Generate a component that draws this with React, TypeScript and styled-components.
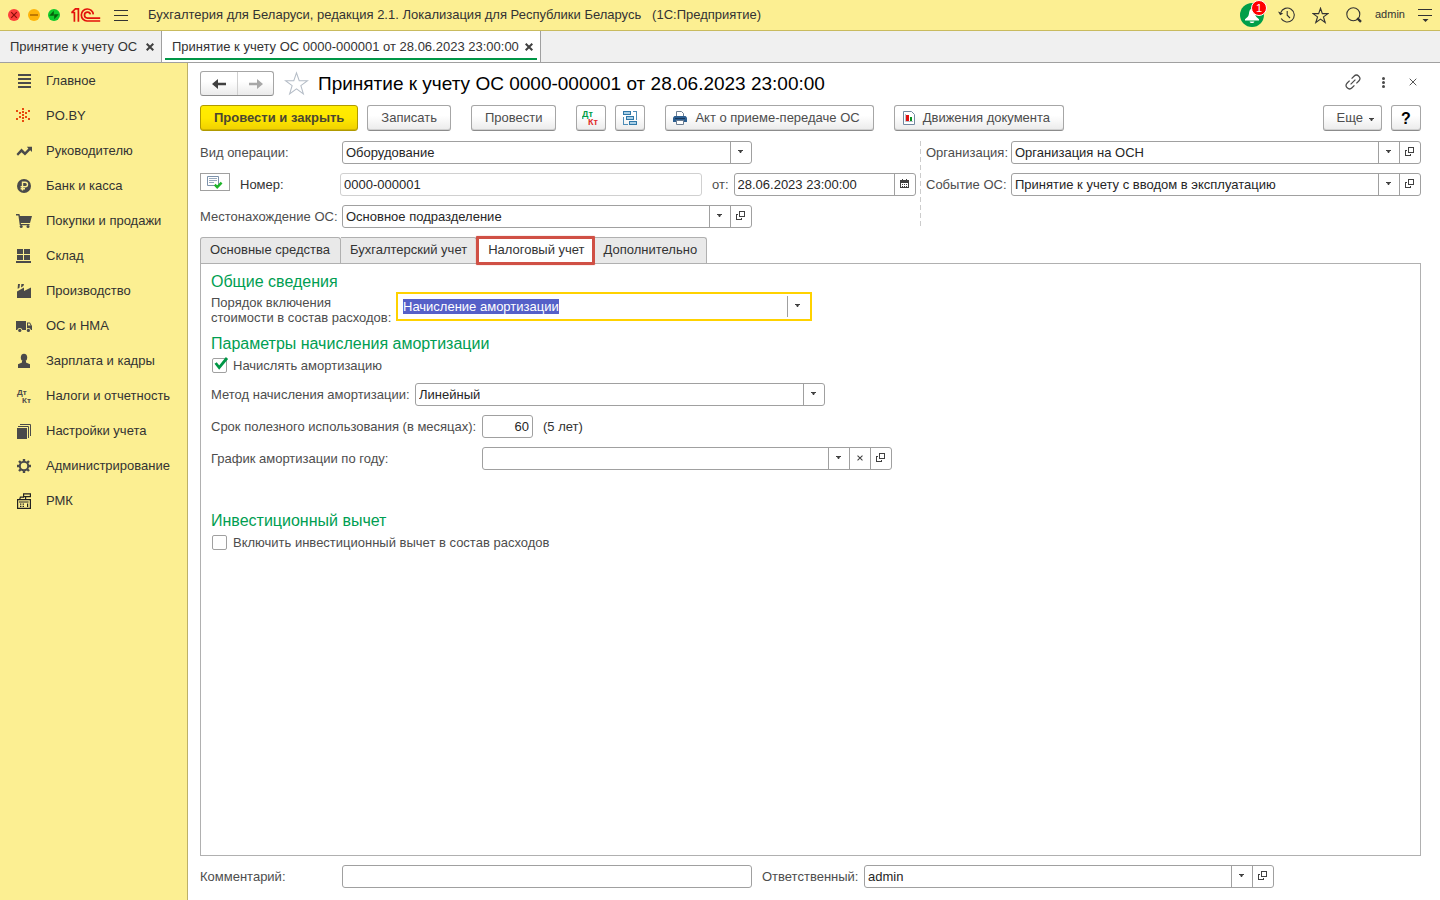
import React, { useEffect, useRef, useState } from "react";
import styled, { createGlobalStyle, css } from "styled-components";

const GlobalStyle = createGlobalStyle`
  *, *::before, *::after { box-sizing: border-box; }
  body {
    margin: 0;
    background: #fff;
    color: #333;
    font: 13px/15px "Liberation Sans", Arial, sans-serif;
  }
  button, input, select { font: inherit; color: inherit; margin: 0; }
  svg { display: block; flex: none; }
`;

/* ---------- frame ---------- */

const Page = styled.div`
  min-height: 100vh;
  display: flex;
  flex-direction: column;
`;

const TitleBar = styled.header`
  height: 31px;
  display: flex;
  align-items: center;
  padding: 0 7px 0 8px;
  background: #fcef92;
  border-bottom: 1px solid #c9bb5e;
`;

const PlainButton = styled.button`
  display: flex;
  align-items: center;
  justify-content: center;
  padding: 0;
  border: 0;
  background: none;
  cursor: pointer;
`;

const WindowButtons = styled.div`
  display: flex;
  gap: 8px;
  margin-right: 11px;
`;

const MenuButton = styled(PlainButton)`
  height: 30px;
  margin: 0 19px 0 13px;
  padding-top: 1px;
`;

const AppTitle = styled.span`
  flex: 1;
  padding-bottom: 1px;
  white-space: pre;
`;

const TopTools = styled.div`
  display: flex;
  align-items: center;
`;

const ToolSlot = styled(PlainButton)<{ $width: number }>`
  position: relative;
  width: ${(p) => p.$width}px;
  height: 30px;
`;

const Badge = styled.span`
  position: absolute;
  top: 0;
  right: 2px;
  width: 16px;
  height: 16px;
  border: 1px solid #fff;
  border-radius: 8px;
  background: #f00;
  color: #fff;
  font-size: 11px;
  line-height: 14px;
  text-align: center;
`;

const UserLink = styled.a`
  width: 29px;
  margin: 0 14px 2px 4px;
  color: #333;
  font-size: 11px;
  text-decoration: none;
`;

const WindowTabs = styled.nav`
  height: 32px;
  display: flex;
  background: #f0f0f0;
  border-bottom: 1px solid #a0a0a0;
`;

const WindowTab = styled.div<{ $active?: boolean }>`
  position: relative;
  min-width: 162px;
  display: flex;
  align-items: center;
  justify-content: space-between;
  gap: 6px;
  padding: 0 7px 0 10px;
  border-right: 1px solid #a0a0a0;
  background: ${(p) => (p.$active ? "#fff" : "transparent")};
  ${(p) =>
    p.$active &&
    css`
      &::after {
        content: "";
        position: absolute;
        left: 3px;
        right: 3px;
        bottom: 2px;
        height: 2px;
        background: #009646;
      }
    `}
`;

const TabLink = styled.a`
  color: #333;
  text-decoration: none;
  white-space: nowrap;
`;

const Body = styled.div`
  flex: 1;
  display: flex;
`;

const Sidebar = styled.nav`
  width: 188px;
  flex: none;
  background: #fcef92;
  border-right: 1px solid #bdb068;
`;

const SideLink = styled.a`
  height: 35px;
  display: flex;
  align-items: center;
  gap: 14px;
  padding-left: 16px;
  color: #333;
  text-decoration: none;
  white-space: nowrap;
`;

/* ---------- document form ---------- */

const Form = styled.main`
  flex: 1;
  min-width: 0;
  display: flex;
  flex-direction: column;
  padding: 8px 19px 12px 12px;
`;

const HeadRow = styled.div`
  display: flex;
  align-items: center;
  height: 25px;
`;

const NavGroup = styled.div`
  display: flex;
  height: 25px;
  border: 1px solid #a6a6a6;
  border-bottom-color: #8c8c8c;
  border-radius: 3px;
  background: linear-gradient(#fff, #fff 40%, #ebebeb);
`;

const NavButton = styled(PlainButton)`
  width: 36px;
  & + & { border-left: 1px solid #d0d0d0; }
`;

const FavButton = styled(PlainButton)`
  margin: 0 9px 0 10px;
`;

const DocTitle = styled.h1`
  flex: 1;
  margin: 0;
  color: #000;
  font-size: 19px;
  font-weight: 400;
  line-height: 24px;
  white-space: nowrap;
`;

const HeadTool = styled(PlainButton)`
  width: 30px;
  height: 24px;
  padding-bottom: 3px;
  &:last-child { margin-right: -7px; }
`;

const Toolbar = styled.div`
  display: flex;
  margin: 9px 0 10px;
`;

const Group = styled.div<{ $end?: boolean }>`
  display: flex;
  gap: 9px;
  margin-left: ${(p) => (p.$end ? "auto" : "0")};
  margin-right: ${(p) => (p.$end ? "0" : "20px")};
`;

const buttonPadding = { text: "0 13px 1px", icon: "0 13px 1px 7px", more: "0 7px 1px 13px", square: "0" };

const Button = styled.button<{ $primary?: boolean; $kind?: keyof typeof buttonPadding }>`
  height: 26px;
  display: flex;
  align-items: center;
  justify-content: center;
  gap: ${(p) => (p.$kind === "more" ? 6 : 8)}px;
  width: ${(p) => (p.$kind === "square" ? "30px" : "auto")};
  padding: ${(p) => buttonPadding[p.$kind ?? "text"]};
  border: 1px solid #a6a6a6;
  border-bottom-color: #8c8c8c;
  border-radius: 3px;
  background: linear-gradient(#fff, #fff 40%, #ebebeb);
  box-shadow: inset 0 -1px 0 #d0d0d0;
  color: #4d4d4d;
  white-space: nowrap;
  cursor: pointer;
  ${(p) =>
    p.$primary &&
    css`
      border-color: #b09a00;
      background: linear-gradient(#ffed00, #ffe800 50%, #f0d000);
      box-shadow: inset 0 -1px 0 #d0b400;
      color: #4a4630;
      font-weight: 700;
    `}
`;

const MoreArrow = styled.span`
  padding-top: 4px;
`;

const HelpMark = styled.span`
  color: #000;
  font-size: 16px;
  font-weight: 700;
`;

const Header = styled.div`
  display: flex;
  justify-content: space-between;
`;

const Column = styled.div<{ $divided?: boolean }>`
  display: flex;
  flex-direction: column;
  gap: 9px;
  ${(p) =>
    p.$divided &&
    css`
      padding-left: 6px;
      background: repeating-linear-gradient(#ccc 0 5px, #fff 5px 8px) left / 1px 100% no-repeat;
    `}
`;

const Row = styled.div`
  display: flex;
  align-items: center;
  height: 23px;
`;

const Label = styled.label<{ $width?: number; $dark?: boolean }>`
  width: ${(p) => (p.$width ? `${p.$width}px` : "auto")};
  flex: none;
  color: ${(p) => (p.$dark ? "#333" : "#4d4d4d")};
  white-space: nowrap;
`;

const Box = styled.div<{ $width: number; $pale?: boolean }>`
  width: ${(p) => p.$width}px;
  height: 23px;
  display: flex;
  border: 1px solid ${(p) => (p.$pale ? "#d0d0d0" : "#a0a0a0")};
  border-radius: 3px;
  background: #fff;
`;

const FocusBox = styled.div`
  width: 416px;
  height: 29px;
  display: flex;
  padding: 2px 1px;
  border: 2px solid #ffd200;
  background: #fff;
`;

const TextInput = styled.input<{ $right?: boolean; $inset?: boolean }>`
  flex: 1;
  min-width: 0;
  padding: 0 3px 0 ${(p) => (p.$inset ? 4 : 3)}px;
  border: 0;
  outline: 0;
  background: none;
  color: #262626;
  text-align: ${(p) => (p.$right ? "right" : "left")};
  &::selection { background: #5560c8; color: #fff; }
`;

const SelectCell = styled.div`
  flex: 1;
  min-width: 0;
  display: grid;
  grid-template-columns: 1fr 21px;
`;

const Select = styled.select`
  grid-area: 1 / 1 / 2 / 3;
  min-width: 0;
  appearance: none;
  padding: 0 24px 0 3px;
  border: 0;
  outline: 0;
  background: none;
  color: #262626;
`;

const SelectArrow = styled.span`
  grid-area: 1 / 2 / 2 / 3;
  display: flex;
  align-items: center;
  justify-content: center;
  padding: 0 1px 2px 0;
  border-left: 1px solid #a0a0a0;
  pointer-events: none;
`;

const CellButton = styled(PlainButton)<{ $wide?: boolean }>`
  width: ${(p) => (p.$wide ? 22 : 21)}px;
  flex: none;
  padding: 0 ${(p) => (p.$wide ? 2 : 1)}px 2px 0;
  border-left: 1px solid #a0a0a0;
`;

const StatusButton = styled(PlainButton)`
  width: 30px;
  height: 18px;
  margin: 0 10px 5px 0;
  border: 1px solid #a0a0a0;
  background: #fff;
`;

/* ---------- page tabs ---------- */

const TabStrip = styled.div`
  display: flex;
  height: 26px;
  margin-top: 9px;
`;

const PageTab = styled.button<{ $active?: boolean }>`
  position: relative;
  padding: 0 9px 2px;
  border: 1px solid #b0b0b0;
  border-width: 1px 1px 0 0;
  border-radius: 0 3px 0 0;
  background: #e9e9e9;
  color: #333;
  white-space: nowrap;
  &:first-child {
    padding-right: 10px;
    border-left-width: 1px;
    border-radius: 3px 3px 0 0;
  }
  ${(p) =>
    p.$active &&
    css`
      padding: 0 9px 2px 11px;
      background: #fff;
      &::after {
        content: "";
        position: absolute;
        inset: -2px -1px;
        border: 3px solid #d05045;
        border-radius: 1px;
        box-shadow: 0 0 1px #d05045;
      }
    `}
`;

const Panel = styled.section`
  flex: 1;
  padding: 8px 10px;
  border: 1px solid #b0b0b0;
`;

const GroupTitle = styled.h2<{ $top?: number }>`
  margin: ${(p) => p.$top ?? 0}px 0 0;
  color: #009e52;
  font-size: 16px;
  font-weight: 400;
  line-height: 20px;
`;

const FocusRow = styled.div`
  display: flex;
  height: 29px;
`;

const TwoLineLabel = styled.label`
  width: 185px;
  flex: none;
  padding-top: 3px;
  color: #4d4d4d;
  white-space: nowrap;
`;

const CheckLabel = styled.label`
  display: flex;
  align-items: center;
  gap: 6px;
  height: 23px;
  margin: 0 0 6px 1px;
  color: #4d4d4d;
`;

const CheckMark = styled.span`
  position: relative;
  display: block;
  width: 15px;
  height: 15px;
  svg { position: absolute; left: 1px; top: -2px; pointer-events: none; }
`;

const CheckInput = styled.input`
  display: block;
  width: 15px;
  height: 15px;
  appearance: none;
  border: 1px solid #a0a0a0;
  border-radius: 2px;
  background: #fff;
`;

const Fields = styled.div`
  display: flex;
  flex-direction: column;
  gap: 9px;
`;

const Note = styled.span`
  margin-left: 10px;
  color: #333;
`;

const DateLabel = styled.label`
  margin: 0 5px 0 10px;
  color: #4d4d4d;
`;

const Footer = styled.div`
  display: flex;
  align-items: center;
  height: 23px;
  margin-top: 9px;
`;

const FooterPart = styled.div`
  display: flex;
  align-items: center;
  margin-right: 10px;
`;

/* ---------- drawings ---------- */

const INK = "#4a4a4a";

const Arrow = () => (
  <svg width="5" height="3" viewBox="0 0 5 3">
    <path d="M0 0H5V1H4L3 3H2L1 1H0Z" fill="#404040" />
  </svg>
);

const OpenIcon = () => (
  <svg width="9" height="9" viewBox="0 0 9 9" fill="none" stroke="#404040" shapeRendering="crispEdges">
    <path d="M3.5 0.5H8.5V5.5H3.5Z M2 3.5H0.5V8.5H5.5V7" />
  </svg>
);

const Cross = ({ size, width = 1, color = "#404040" }: { size: number; width?: number; color?: string }) => (
  <svg width={size} height={size} viewBox="0 0 8 8" fill="none" stroke={color} strokeWidth={width}>
    <path d="M0.7 0.7L7.3 7.3M7.3 0.7L0.7 7.3" />
  </svg>
);

const CalendarIcon = () => (
  <svg width="9" height="9" viewBox="0 0 9 9" fill="#404040" shapeRendering="crispEdges">
    <path d="M0 1H9V9H0Z M1 4V8H8V4Z" fillRule="evenodd" />
    <path d="M2 0h1v1h-1z M6 0h1v1h-1z M2 5h1v1h-1z M4 5h1v1h-1z M6 5h1v1h-1z M2 7h1v1h-1z M4 7h1v1h-1z M6 7h1v1h-1z" />
  </svg>
);

const Logo = () => (
  <svg width="30" height="14" viewBox="0 0 30 14" fill="none" stroke="#e3120b" strokeWidth="1.7">
    <path d="M0.3 4.5H3.4V13.8M0.6 4.5L4.4 0.9H7.4V13.8" />
    <path d="M22.3 6.4A6 6 0 1 0 16 13H29.2" />
    <path d="M19.4 6.4A3 3 0 1 0 16.4 10.1H29.2" />
  </svg>
);

const WinClose = () => (
  <svg width="12" height="12" viewBox="0 0 12 12">
    <circle cx="6" cy="6" r="6" fill="#fc403c" />
    <path d="M3.2 3.2L8.8 8.8M8.8 3.2L3.2 8.8" stroke="#8a0f0c" strokeWidth="1.2" />
  </svg>
);
const WinMin = () => (
  <svg width="12" height="12" viewBox="0 0 12 12">
    <circle cx="6" cy="6" r="6" fill="#feb40a" />
    <path d="M2 6H10" stroke="#b06c00" strokeWidth="1.6" />
  </svg>
);
const WinMax = () => (
  <svg width="12" height="12" viewBox="0 0 12 12">
    <circle cx="6" cy="6" r="6" fill="#0fc92c" />
    <path d="M5.8 1.8V6.8H1.2Z M6.2 10.2V5.2H10.8Z" fill="#04600c" />
  </svg>
);

const Burger = () => (
  <svg width="15" height="11" viewBox="0 0 15 11" stroke="#333" shapeRendering="crispEdges">
    <path d="M0 0.5H14M0 5.5H14M0 10.5H14" />
  </svg>
);

const BellIcon = () => (
  <svg width="24" height="24" viewBox="0 0 24 24">
    <circle cx="12" cy="12" r="12" fill="#009e49" />
    <path d="M12 5.5C9.6 6.2 9.2 8.4 8.9 11C8.5 13.6 7 14.6 5 16.2V17.5H19V16.2C17 14.6 15.5 13.6 15.1 11C14.8 8.4 14.4 6.2 12 5.5Z M9.6 18.4H14.4C14 20.6 10 20.6 9.6 18.4Z" fill="#fff" />
  </svg>
);

const HistoryIcon = () => (
  <svg width="17" height="16" viewBox="0 0 17 16" fill="none" stroke="#333" strokeWidth="1.1">
    <path d="M2.7 5.6A7 7 0 1 1 3.2 11.5" />
    <path d="M9.2 4V8.2L12 11" />
    <path d="M0 4.6L5.2 6.6L2.2 8.2Z" fill="#333" stroke="none" />
  </svg>
);

const StarIcon = ({ size, color, width }: { size: number; color: string; width: number }) => (
  <svg width={size} height={size} viewBox="0 0 24 24" fill="none" stroke={color} strokeWidth={width} strokeLinejoin="miter">
    <path d="M12 1.8L14.6 9.3H22.6L16.2 14L18.6 21.9L12 17.1L5.4 21.9L7.8 14L1.4 9.3H9.4Z" />
  </svg>
);

const SearchIcon = () => (
  <svg width="16" height="16" viewBox="0 0 16 16" fill="none" stroke="#333">
    <circle cx="7.3" cy="7.2" r="6.5" strokeWidth="1.1" />
    <path d="M11.2 11.2L15 14.9" strokeWidth="2.4" />
  </svg>
);

const PanelMenuIcon = () => (
  <svg width="15" height="13" viewBox="0 0 15 13">
    <path d="M0 0.5H14M0 6.5H14" stroke="#333" shapeRendering="crispEdges" />
    <path d="M4.5 10H10.5L7.5 13Z" fill="#333" />
  </svg>
);

const LinkIcon = () => (
  <svg width="18" height="18" viewBox="0 0 18 18" fill="none" stroke="#4a4a4a" strokeWidth="1.2">
    <g transform="rotate(-45 9 9)">
      <path d="M7.6 12.4H4.2A3.4 3.4 0 0 1 4.2 5.6H7.6" />
      <path d="M10.4 5.6H13.8A3.4 3.4 0 0 1 13.8 12.4H10.4" />
      <path d="M5.6 9H12.4" />
    </g>
  </svg>
);

const DotsIcon = () => (
  <svg width="3" height="11" viewBox="0 0 3 11" fill="#4a4a4a">
    <circle cx="1.5" cy="1.5" r="1.5" />
    <circle cx="1.5" cy="5.5" r="1.5" />
    <circle cx="1.5" cy="9.5" r="1.5" />
  </svg>
);

const NavArrow = ({ forward }: { forward?: boolean }) => (
  <svg width="14" height="10" viewBox="0 0 14 10" fill={forward ? "#a8a8a8" : "#404040"}>
    {forward ? <path d="M14 5L8 0V3.8H0V6.2H8V10Z" /> : <path d="M0 5L6 0V3.8H14V6.2H6V10Z" />}
  </svg>
);

const DtKt = ({ dt, kt, large }: { dt: string; kt: string; large?: boolean }) => {
  const width = large ? 18 : 16;
  return (
    <svg
      width={width}
      height="16"
      viewBox={`0 0 ${width} 16`}
      fontFamily="Liberation Sans, Arial, sans-serif"
      fontSize={large ? 9 : 8}
      fontWeight="700"
    >
      <text x={large ? 0 : 1} y="7" fill={dt}>Дт</text>
      <text x="6" y="15" fill={kt}>Кт</text>
    </svg>
  );
};

const StructureIcon = () => (
  <svg width="15" height="15" viewBox="0 0 15 15" fill="none" shapeRendering="crispEdges">
    <g fill="#a9cfe6" stroke="#2f78a8">
      <path d="M0.5 0.5H7.5V3.5H0.5Z" />
      <path d="M3.5 5.5H10.5V8.5H3.5Z" />
      <path d="M6.5 10.5H13.5V13.5H6.5Z" />
    </g>
    <path d="M10 0.5H13.5V9M0.5 6V13.5H5" stroke="#4d8db8" />
  </svg>
);

const PrinterIcon = () => (
  <svg width="14" height="14" viewBox="0 0 14 14">
    <path d="M3.5 6V0.5H8.5L10.5 2.5V6" fill="#fff" stroke="#6d7f93" />
    <path d="M1.5 5H12.5L14 6.5V11H0V6.5Z" fill="#2d5f91" />
    <path d="M2 7.5H12" stroke="#16375c" />
    <path d="M3.5 9.5H10.5V13.5H3.5Z" fill="#fff" stroke="#6d7f93" />
  </svg>
);

const ReportIcon = () => (
  <svg width="13" height="14" viewBox="0 0 13 14">
    <path d="M1.5 0.5H9.5L12.5 3.5V13.5H1.5Z" fill="#fff" stroke="#7289a0" />
    <path d="M3.5 3V10.5H11" stroke="#b8c2cc" fill="none" />
    <path d="M4 4H7V10H4Z" fill="#e01010" />
    <path d="M8 6H10V10H8Z" fill="#089020" />
  </svg>
);

const StatusIcon = () => (
  <svg width="16" height="13" viewBox="0 0 16 13" fill="none">
    <path d="M0.5 0.5H11.5V9.5H0.5Z" stroke="#7d92ab" />
    <path d="M2 2.5H10M2 4.5H10M2 6.5H7" stroke="#98a9bd" />
    <path d="M7.8 8.6L10.2 11.2L14.6 6.6" stroke="#1fb52a" strokeWidth="2.4" />
  </svg>
);

const CheckIcon = () => (
  <svg width="16" height="16" viewBox="0 0 16 16" fill="none" stroke="#009646" strokeWidth="2.8">
    <path d="M2.6 7L6.2 11.6L14 2" />
  </svg>
);

const DOTS: [number, number][] = [
  [6, 0], [6, 3], [6, 6], [6, 9], [6, 12],
  [3, 4], [9, 4], [3, 8], [9, 8],
  [0, 2], [12, 2], [0, 10], [12, 10],
];

const sideIcons: Record<string, React.ReactNode> = {
  list: <path d="M2 1h13v2h-13z M2 5h13v2h-13z M2 9h13v2h-13z M2 13h13v2h-13z" />,
  dots: (
    <g fill="#e84a10" shapeRendering="crispEdges">
      {DOTS.map(([x, y]) => (
        <rect key={`${x}-${y}`} x={x} y={y} width="2" height="2" />
      ))}
    </g>
  ),
  trend: <path d="M0.5 11L5.5 5.6L9 9L12.4 5.4L10.8 3.8H16V9L14.2 7.2L9 12.6L5.5 9.2L2 12.8Z" />,
  ruble: (
    <>
      <circle cx="8" cy="8" r="7" />
      <path d="M6.5 12.5V4.2H9.2A2.2 2.2 0 0 1 9.2 8.8H4.6M4.6 10.7H9" fill="none" stroke="#fcef92" strokeWidth="1.4" />
    </>
  ),
  cart: (
    <>
      <path d="M0 1H3.4L4 3H16L14 10H4.8L5 11H13.6V12.2H3.8L2.4 2.6H0Z" />
      <circle cx="5.2" cy="13.6" r="1.5" />
      <circle cx="12" cy="13.6" r="1.5" />
    </>
  ),
  store: <path d="M1 1h6v5h-6z M8 1h6v5h-6z M1 7h6v5h-6z M8 7h6v5h-6z M0 13h15v2h-15z" />,
  factory: <path d="M2 1H4L3.4 5L1.6 5.8Z M5.4 1H8L7.4 3L5 4.4Z M1 8.6L8 4.4V8L15 4.4V15H1Z" />,
  truck: (
    <>
      <path d="M0 3H10V12H0Z M11 4.6H14L16 8V12H11Z" />
      <circle cx="3.8" cy="12.4" r="2.5" fill="#fcef92" />
      <circle cx="12.4" cy="12.4" r="2.5" fill="#fcef92" />
      <circle cx="3.8" cy="12.4" r="1.6" />
      <circle cx="12.4" cy="12.4" r="1.6" />
      <path d="M12 5.6H13.6L14.6 7.6H12Z" fill="#fcef92" />
    </>
  ),
  person: (
    <>
      <ellipse cx="8" cy="4.6" rx="3.2" ry="3.8" />
      <path d="M6 8H10V9.4L14 11.2V15H2V11.2L6 9.4Z" />
    </>
  ),
  pages: (
    <>
      <path d="M1 5h10v11h-10z" />
      <path d="M2 3.5H12.5V15M4 1.5H14.5V13" fill="none" stroke={INK} />
    </>
  ),
  gear: (
    <g fill="none" stroke={INK}>
      <circle cx="8" cy="8" r="4.2" strokeWidth="2" />
      <path d="M8 1V3.6M8 12.4V15M1 8H3.6M12.4 8H15M3 3L5 5M11 11L13 13M13 3L11 5M5 11L3 13" strokeWidth="2.4" />
    </g>
  ),
  till: (
    <g fill="none" stroke="#222" strokeWidth="1.2">
      <path d="M1.6 6.6H14.4V15.4H1.6Z M7.6 0.8H14.4V3.6H7.6Z M9.6 3.6V6.6 M3 9H12.6" />
      <path d="M3.6 6.6L4.4 4.2H8" />
      <path d="M4 11.2H5.4M6.6 11.2H8M4 13.4H5.4M6.6 13.4H8M11.6 10.4V14" />
    </g>
  ),
};

const SideIcon = ({ name }: { name: string }) =>
  name === "dtkt" ? (
    <DtKt dt={INK} kt={INK} />
  ) : (
    <svg width="16" height="16" viewBox="0 0 16 16" fill={INK}>
      {sideIcons[name]}
    </svg>
  );

const sections = [
  ["list", "Главное"],
  ["dots", "PO.BY"],
  ["trend", "Руководителю"],
  ["ruble", "Банк и касса"],
  ["cart", "Покупки и продажи"],
  ["store", "Склад"],
  ["factory", "Производство"],
  ["truck", "ОС и НМА"],
  ["person", "Зарплата и кадры"],
  ["dtkt", "Налоги и отчетность"],
  ["pages", "Настройки учета"],
  ["gear", "Администрирование"],
  ["till", "РМК"],
];

/* ---------- form controls ---------- */

type ComboProps = { id: string; value: string; open?: boolean; clear?: boolean };

const Combo = ({ id, value, open, clear }: ComboProps) => (
  <Box $width={410}>
    <SelectCell>
      <Select id={id} defaultValue={value}>
        <option>{value}</option>
      </Select>
      <SelectArrow>
        <Arrow />
      </SelectArrow>
    </SelectCell>
    {clear && (
      <CellButton type="button" aria-label="Очистить">
        <Cross size={6} width={1.4} />
      </CellButton>
    )}
    {open && (
      <CellButton type="button" aria-label="Открыть">
        <OpenIcon />
      </CellButton>
    )}
  </Box>
);

const Check = ({ label, initial }: { label: string; initial: boolean }) => {
  const [on, setOn] = useState(initial);
  return (
    <CheckLabel>
      <CheckMark>
        <CheckInput type="checkbox" checked={on} onChange={() => setOn(!on)} />
        {on && <CheckIcon />}
      </CheckMark>
      {label}
    </CheckLabel>
  );
};

export default function App() {
  const costInput = useRef<HTMLInputElement>(null);

  useEffect(() => {
    costInput.current?.focus();
    costInput.current?.select();
  }, []);

  return (
    <Page>
      <GlobalStyle />
      <TitleBar>
        <WindowButtons>
          <PlainButton type="button" aria-label="Закрыть"><WinClose /></PlainButton>
          <PlainButton type="button" aria-label="Свернуть"><WinMin /></PlainButton>
          <PlainButton type="button" aria-label="Развернуть"><WinMax /></PlainButton>
        </WindowButtons>
        <Logo />
        <MenuButton type="button" aria-label="Меню"><Burger /></MenuButton>
        <AppTitle>{"Бухгалтерия для Беларуси, редакция 2.1. Локализация для Республики Беларусь   (1С:Предприятие)"}</AppTitle>
        <TopTools>
          <ToolSlot $width={34} type="button" aria-label="Уведомления">
            <BellIcon />
            <Badge>1</Badge>
          </ToolSlot>
          <ToolSlot $width={34} type="button" aria-label="История"><HistoryIcon /></ToolSlot>
          <ToolSlot $width={34} type="button" aria-label="Избранное"><StarIcon size={17} color="#333" width={1.6} /></ToolSlot>
          <ToolSlot $width={34} type="button" aria-label="Поиск"><SearchIcon /></ToolSlot>
          <UserLink href="#user">admin</UserLink>
          <PlainButton type="button" aria-label="Сервис"><PanelMenuIcon /></PlainButton>
        </TopTools>
      </TitleBar>

      <WindowTabs>
        <WindowTab>
          <TabLink href="#list">Принятие к учету ОС</TabLink>
          <PlainButton type="button" aria-label="Закрыть вкладку"><Cross size={8} width={2} /></PlainButton>
        </WindowTab>
        <WindowTab $active>
          <TabLink href="#doc">Принятие к учету ОС 0000-000001 от 28.06.2023 23:00:00</TabLink>
          <PlainButton type="button" aria-label="Закрыть вкладку"><Cross size={8} width={2} /></PlainButton>
        </WindowTab>
      </WindowTabs>

      <Body>
        <Sidebar>
          {sections.map(([icon, name]) => (
            <SideLink key={name} href={`#${icon}`}>
              <SideIcon name={icon} />
              {name}
            </SideLink>
          ))}
        </Sidebar>

        <Form>
          <HeadRow>
            <NavGroup>
              <NavButton type="button" aria-label="Назад"><NavArrow /></NavButton>
              <NavButton type="button" aria-label="Вперед"><NavArrow forward /></NavButton>
            </NavGroup>
            <FavButton type="button" aria-label="В избранное"><StarIcon size={25} color="#b4bcc6" width={1} /></FavButton>
            <DocTitle>Принятие к учету ОС 0000-000001 от 28.06.2023 23:00:00</DocTitle>
            <HeadTool type="button" aria-label="Ссылка"><LinkIcon /></HeadTool>
            <HeadTool type="button" aria-label="Еще"><DotsIcon /></HeadTool>
            <HeadTool type="button" aria-label="Закрыть"><Cross size={8} color="#555" /></HeadTool>
          </HeadRow>

          <Toolbar>
            <Group>
              <Button type="button" $primary>Провести и закрыть</Button>
              <Button type="button">Записать</Button>
            </Group>
            <Group>
              <Button type="button">Провести</Button>
            </Group>
            <Group>
              <Button type="button" $kind="square" aria-label="Дт Кт"><DtKt dt="#009e49" kt="#e02a2a" large /></Button>
              <Button type="button" $kind="square" aria-label="Структура подчиненности"><StructureIcon /></Button>
            </Group>
            <Group>
              <Button type="button" $kind="icon"><PrinterIcon />Акт о приеме-передаче ОС</Button>
            </Group>
            <Group>
              <Button type="button" $kind="icon"><ReportIcon />Движения документа</Button>
            </Group>
            <Group $end>
              <Button type="button" $kind="more">Еще<MoreArrow><Arrow /></MoreArrow></Button>
              <Button type="button" $kind="square" aria-label="Справка"><HelpMark>?</HelpMark></Button>
            </Group>
          </Toolbar>

          <Header>
            <Column>
              <Row>
                <Label $width={142} htmlFor="operation">Вид операции:</Label>
                <Combo id="operation" value="Оборудование" />
              </Row>
              <Row>
                <StatusButton type="button" aria-label="Статус"><StatusIcon /></StatusButton>
                <Label $width={100} $dark htmlFor="number">Номер:</Label>
                <Box $width={362} $pale><TextInput id="number" defaultValue="0000-000001" /></Box>
                <DateLabel htmlFor="date">от:</DateLabel>
                <Box $width={182}>
                  <TextInput id="date" defaultValue="28.06.2023 23:00:00" />
                  <CellButton type="button" aria-label="Календарь"><CalendarIcon /></CellButton>
                </Box>
              </Row>
              <Row>
                <Label $width={142} htmlFor="place">Местонахождение ОС:</Label>
                <Combo id="place" value="Основное подразделение" open />
              </Row>
            </Column>
            <Column $divided>
              <Row>
                <Label $width={85} htmlFor="org">Организация:</Label>
                <Combo id="org" value="Организация на ОСН" open />
              </Row>
              <Row>
                <Label $width={85} htmlFor="event">Событие ОС:</Label>
                <Combo id="event" value="Принятие к учету с вводом в эксплуатацию" open />
              </Row>
            </Column>
          </Header>

          <TabStrip role="tablist">
            <PageTab type="button" role="tab">Основные средства</PageTab>
            <PageTab type="button" role="tab">Бухгалтерский учет</PageTab>
            <PageTab type="button" role="tab" aria-selected $active>Налоговый учет</PageTab>
            <PageTab type="button" role="tab">Дополнительно</PageTab>
          </TabStrip>

          <Panel role="tabpanel">
            <GroupTitle>Общие сведения</GroupTitle>
            <FocusRow>
              <TwoLineLabel htmlFor="cost">Порядок включения<br />стоимости в состав расходов:</TwoLineLabel>
              <FocusBox>
                <TextInput id="cost" ref={costInput} $inset defaultValue="Начисление амортизации" />
                <CellButton type="button" $wide aria-label="Выбрать"><Arrow /></CellButton>
              </FocusBox>
            </FocusRow>

            <GroupTitle $top={13}>Параметры начисления амортизации</GroupTitle>
            <Check label="Начислять амортизацию" initial />
            <Fields>
              <Row>
                <Label $width={204} htmlFor="method">Метод начисления амортизации:</Label>
                <Combo id="method" value="Линейный" />
              </Row>
              <Row>
                <Label $width={271} htmlFor="term">Срок полезного использования (в месяцах):</Label>
                <Box $width={51}><TextInput id="term" $right defaultValue="60" /></Box>
                <Note>(5 лет)</Note>
              </Row>
              <Row>
                <Label $width={271} htmlFor="schedule">График амортизации по году:</Label>
                <Combo id="schedule" value="" clear open />
              </Row>
            </Fields>

            <GroupTitle $top={41}>Инвестиционный вычет</GroupTitle>
            <Check label="Включить инвестиционный вычет в состав расходов" initial={false} />
          </Panel>

          <Footer>
            <FooterPart>
              <Label $width={142} htmlFor="comment">Комментарий:</Label>
              <Box $width={410}><TextInput id="comment" /></Box>
            </FooterPart>
            <FooterPart>
              <Label $width={102} htmlFor="responsible">Ответственный:</Label>
              <Combo id="responsible" value="admin" open />
            </FooterPart>
          </Footer>
        </Form>
      </Body>
    </Page>
  );
}
